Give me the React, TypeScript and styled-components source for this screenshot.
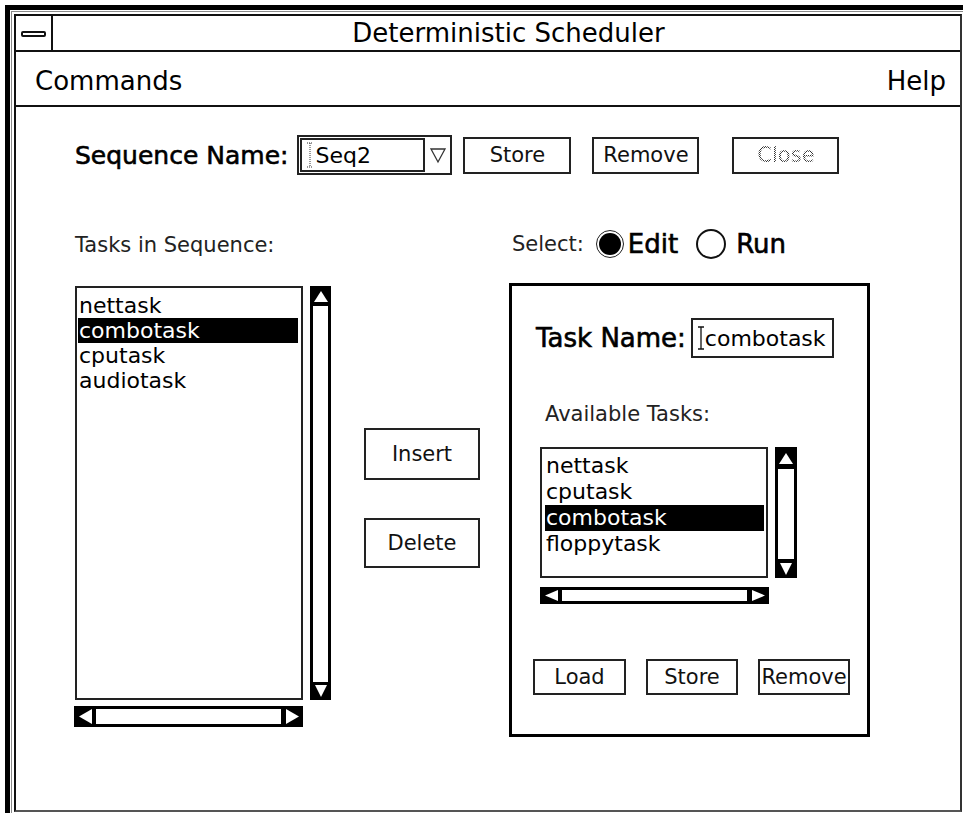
import * as React from 'react';
import styled, { createGlobalStyle } from 'styled-components';

const GlobalStyle = createGlobalStyle`
  html, body {
    margin: 0;
    padding: 0;
    background: #fff;
  }
  body {
    font-family: "DejaVu Sans", "Liberation Sans", sans-serif;
    color: #000;
  }
`;

const Screen = styled.div`
  width: 963px;
  height: 813px;
  overflow: hidden;
  box-sizing: border-box;
  padding: 5px 0 0 5px;
  background: #fff;
`;

const Frame = styled.div`
  height: 100%;
  box-sizing: border-box;
  border-top: 5px solid #000;
  border-left: 5px solid #000;
  padding: 1px 0 0 1px;
`;

const Inset = styled.div`
  height: 100%;
  box-sizing: border-box;
  border-top: 1px solid #8a8a8a;
  border-left: 1px solid #8a8a8a;
  padding: 2px 0 0 2px;
`;

const Window = styled.div`
  width: 948px;
  height: 798px;
  box-sizing: border-box;
  border: 2px solid #111;
  border-right-color: #333;
  border-bottom-color: #555;
  display: flex;
  flex-direction: column;
`;

const TitleBar = styled.div`
  flex: 0 0 36px;
  box-sizing: border-box;
  border-bottom: 2px solid #111;
  display: flex;
  align-items: stretch;
`;

const CloseBox = styled.div`
  width: 37px;
  box-sizing: border-box;
  border-right: 2px solid #111;
  display: flex;
  align-items: center;
  justify-content: center;
  padding-top: 2px;
`;

const CloseBar = styled.div`
  width: 25px;
  height: 6px;
  box-sizing: border-box;
  border: 2px solid #111;
  border-radius: 2px;
`;

const Title = styled.div`
  flex: 1;
  text-align: center;
  font-size: 26px;
  line-height: 34px;
  padding-left: 4px;
`;

const MenuBar = styled.div`
  flex: 0 0 55px;
  box-sizing: border-box;
  border-bottom: 2px solid #111;
  display: flex;
  align-items: center;
  justify-content: space-between;
  padding: 4px 14px 0 19px;
  font-size: 26px;
`;

const Content = styled.div`
  flex: 1;
  padding: 28px 0 0 59px;
`;

const SeqRow = styled.div`
  display: flex;
  align-items: center;
  height: 40px;
`;

// medium-weight label: regular face with a light stroke
const StrongLabel = styled.span<{ $size?: number; $ml?: number }>`
  font-size: ${(p) => p.$size ?? 25}px;
  margin-left: ${(p) => p.$ml ?? 0}px;
  -webkit-text-stroke: 0.6px #000;
  white-space: nowrap;
`;

const Combo = styled.div`
  margin-left: 9px;
  width: 155px;
  height: 40px;
  box-sizing: border-box;
  border: 2px solid #222;
  display: flex;
  align-items: center;
  padding-left: 1px;
`;

const ComboField = styled.div`
  width: 125px;
  height: 34px;
  box-sizing: border-box;
  border: 2px solid #222;
  display: flex;
  align-items: center;
  padding-left: 4px;
  font-size: 22px;
  gap: 1px;
`;

const ComboArrow = styled.div`
  flex: 1;
  display: flex;
  justify-content: center;
`;

const Button = styled.button<{ $w: number; $h: number; $ml?: number }>`
  width: ${(p) => p.$w}px;
  height: ${(p) => p.$h}px;
  margin-left: ${(p) => p.$ml ?? 0}px;
  box-sizing: border-box;
  border: 2px solid #222;
  border-radius: 0;
  background: #fff;
  padding: 0;
  font-family: "DejaVu Sans", "Liberation Sans", sans-serif;
  font-size: 21px;
  color: #111;
  display: flex;
  align-items: center;
  justify-content: center;
`;

const Dimmed = styled.span`
  color: transparent;
  background: repeating-conic-gradient(#333 0 25%, #fff 0 50%) 0 0 / 2px 2px;
  -webkit-background-clip: text;
  background-clip: text;
`;

const Body = styled.div`
  display: flex;
  margin-top: 55px;
`;

const LeftCol = styled.div`
  width: 256px;
  display: flex;
  flex-direction: column;
`;

const ThinLabel = styled.div<{ $ml?: number; $mt?: number }>`
  font-size: 21px;
  line-height: 30px;
  color: #222;
  margin-left: ${(p) => p.$ml ?? 0}px;
  margin-top: ${(p) => p.$mt ?? 0}px;
`;

const ListRow = styled.div<{ $mt: number; $ml?: number; $gap: number }>`
  display: flex;
  margin-top: ${(p) => p.$mt}px;
  margin-left: ${(p) => p.$ml ?? 0}px;
  gap: ${(p) => p.$gap}px;
`;

const ListBox = styled.div<{ $w: number; $h: number; $pt: number; $pl: number; $pr: number }>`
  width: ${(p) => p.$w}px;
  height: ${(p) => p.$h}px;
  box-sizing: border-box;
  border: 2px solid #222;
  padding: ${(p) => `${p.$pt}px ${p.$pr}px 0 ${p.$pl}px`};
  overflow: hidden;
`;

const ListItem = styled.div<{ $sel?: boolean; $h: number }>`
  height: ${(p) => p.$h}px;
  line-height: ${(p) => p.$h}px;
  font-size: 22px;
  padding-left: 1px;
  white-space: nowrap;
  background: ${(p) => (p.$sel ? '#000' : 'transparent')};
  color: ${(p) => (p.$sel ? '#fff' : '#000')};
`;

const Scroll = styled.div<{ $vert: boolean; $w: number; $h: number; $mt?: number; $ml?: number }>`
  display: flex;
  flex-direction: ${(p) => (p.$vert ? 'column' : 'row')};
  width: ${(p) => p.$w}px;
  height: ${(p) => p.$h}px;
  margin-top: ${(p) => p.$mt ?? 0}px;
  margin-left: ${(p) => p.$ml ?? 0}px;
  background: #000;
`;

const Cap = styled.div<{ $size: number }>`
  flex: 0 0 ${(p) => p.$size}px;
  display: flex;
  align-items: center;
  justify-content: center;
`;

const Trough = styled.div<{ $vert: boolean }>`
  flex: 1;
  margin: ${(p) => (p.$vert ? '0 3px' : '3px 0')};
  background: #fff;
`;

const MidCol = styled.div`
  width: 116px;
  margin-left: 33px;
  padding-top: 198px;
  display: flex;
  flex-direction: column;
  gap: 38px;
`;

const RightCol = styled.div`
  margin-left: 29px;
  display: flex;
  flex-direction: column;
`;

const SelectRow = styled.div`
  height: 28px;
  display: flex;
  align-items: center;
  padding-left: 3px;
`;

const RadioOuter = styled.div<{ $on?: boolean; $ml: number }>`
  width: ${(p) => (p.$on ? 28 : 30)}px;
  height: ${(p) => (p.$on ? 28 : 30)}px;
  margin: 0 ${(p) => (p.$on ? 4 : 10)}px 0 ${(p) => p.$ml}px;
  box-sizing: border-box;
  border-radius: 50%;
  border: ${(p) => (p.$on ? '1px solid #222' : '2px solid #111')};
  display: flex;
  align-items: center;
  justify-content: center;
`;

const RadioDot = styled.div`
  width: 22px;
  height: 22px;
  border-radius: 50%;
  background: #000;
`;

const Panel = styled.div`
  margin-top: 25px;
  width: 361px;
  height: 454px;
  box-sizing: border-box;
  border: 3px solid #000;
  display: flex;
  flex-direction: column;
`;

const TaskRow = styled.div`
  display: flex;
  align-items: center;
  height: 40px;
  margin: 32px 0 0 24px;
`;

const TextField = styled.div`
  margin-left: 5px;
  width: 143px;
  height: 40px;
  box-sizing: border-box;
  border: 2px solid #222;
  display: flex;
  align-items: center;
  padding-left: 4px;
  font-size: 22px;
`;

const ButtonRow = styled.div`
  display: flex;
  margin: 55px 0 0 21px;
  gap: 20px;
`;

type Dir = 'up' | 'down' | 'left' | 'right';

const Arrow = ({ dir, w, h }: { dir: Dir; w: number; h: number }) => {
  const pts = {
    up: `${w / 2},0 ${w},${h} 0,${h}`,
    down: `0,0 ${w},0 ${w / 2},${h}`,
    left: `${w},0 ${w},${h} 0,${h / 2}`,
    right: `0,0 ${w},${h / 2} 0,${h}`,
  }[dir];
  return (
    <svg width={w} height={h} viewBox={`0 0 ${w} ${h}`}>
      <polygon points={pts} fill="#fff" />
    </svg>
  );
};

const VScrollbar = ({ h, w, top, bottom }: { h: number; w: number; top: number; bottom: number }) => (
  <Scroll $vert $w={w} $h={h}>
    <Cap $size={top}>
      <Arrow dir="up" w={14} h={11} />
    </Cap>
    <Trough $vert />
    <Cap $size={bottom}>
      <Arrow dir="down" w={12} h={12} />
    </Cap>
  </Scroll>
);

const HScrollbar = ({ w, h, mt, ml }: { w: number; h: number; mt: number; ml?: number }) => (
  <Scroll $vert={false} $w={w} $h={h} $mt={mt} $ml={ml}>
    <Cap $size={22}>
      <Arrow dir="left" w={13} h={h - 6} />
    </Cap>
    <Trough $vert={false} />
    <Cap $size={22}>
      <Arrow dir="right" w={13} h={h - 6} />
    </Cap>
  </Scroll>
);

const DottedCaret = () => (
  <svg width="8" height="26" viewBox="0 0 8 26">
    <path d="M1 1h6M4 1v24M1 25h6" stroke="#333" strokeWidth="1" strokeDasharray="1 1" fill="none" />
  </svg>
);

const Caret = () => (
  <svg width="8" height="24" viewBox="0 0 8 24">
    <path d="M1 1h6M4 1v22M1 23h6" stroke="#111" strokeWidth="1.3" fill="none" />
  </svg>
);

const sequence = ['nettask', 'combotask', 'cputask', 'audiotask'];
const available = ['nettask', 'cputask', 'combotask', 'floppytask'];

const App = () => (
  <Screen>
    <GlobalStyle />
    <Frame>
      <Inset>
        <Window>
          <TitleBar>
            <CloseBox>
              <CloseBar />
            </CloseBox>
            <Title>Deterministic Scheduler</Title>
          </TitleBar>
          <MenuBar>
            <span>Commands</span>
            <span>Help</span>
          </MenuBar>
          <Content>
            <SeqRow>
              <StrongLabel>Sequence Name:</StrongLabel>
              <Combo>
                <ComboField>
                  <DottedCaret />
                  <span>Seq2</span>
                </ComboField>
                <ComboArrow>
                  <svg width="18" height="18" viewBox="0 0 18 18">
                    <path d="M2 3h14L9 16z" fill="none" stroke="#333" strokeWidth="1.3" />
                  </svg>
                </ComboArrow>
              </Combo>
              <Button $w={108} $h={37} $ml={11}>Store</Button>
              <Button $w={107} $h={37} $ml={21}>Remove</Button>
              <Button $w={107} $h={37} $ml={33}>
                <Dimmed>Close</Dimmed>
              </Button>
            </SeqRow>

            <Body>
              <LeftCol>
                <ThinLabel>Tasks in Sequence:</ThinLabel>
                <ListRow $mt={26} $gap={7}>
                  <ListBox $w={228} $h={414} $pt={5} $pl={1} $pr={3}>
                    {sequence.map((t) => (
                      <ListItem key={t} $h={25} $sel={t === 'combotask'}>
                        {t}
                      </ListItem>
                    ))}
                  </ListBox>
                  <VScrollbar w={21} h={414} top={20} bottom={18} />
                </ListRow>
                <HScrollbar w={229} h={21} mt={6} ml={-1} />
              </LeftCol>

              <MidCol>
                <Button $w={116} $h={52}>Insert</Button>
                <Button $w={116} $h={50}>Delete</Button>
              </MidCol>

              <RightCol>
                <SelectRow>
                  <ThinLabel as="span">Select:</ThinLabel>
                  <RadioOuter $on $ml={12}>
                    <RadioDot />
                  </RadioOuter>
                  <StrongLabel $size={26}>Edit</StrongLabel>
                  <RadioOuter $ml={18} />
                  <StrongLabel $size={26}>Run</StrongLabel>
                </SelectRow>
                <Panel>
                  <TaskRow>
                    <StrongLabel $size={26}>Task Name:</StrongLabel>
                    <TextField>
                      <Caret />
                      <span>combotask</span>
                    </TextField>
                  </TaskRow>
                  <ThinLabel $ml={33} $mt={41}>
                    Available Tasks:
                  </ThinLabel>
                  <ListRow $mt={18} $ml={28} $gap={7}>
                    <ListBox $w={228} $h={131} $pt={4} $pl={3} $pr={2}>
                      {available.map((t) => (
                        <ListItem key={t} $h={26} $sel={t === 'combotask'}>
                          {t}
                        </ListItem>
                      ))}
                    </ListBox>
                    <VScrollbar w={22} h={131} top={22} bottom={19} />
                  </ListRow>
                  <HScrollbar w={229} h={17} mt={9} ml={28} />
                  <ButtonRow>
                    <Button $w={93} $h={36}>Load</Button>
                    <Button $w={92} $h={36}>Store</Button>
                    <Button $w={92} $h={36}>Remove</Button>
                  </ButtonRow>
                </Panel>
              </RightCol>
            </Body>
          </Content>
        </Window>
      </Inset>
    </Frame>
  </Screen>
);

export default App;
